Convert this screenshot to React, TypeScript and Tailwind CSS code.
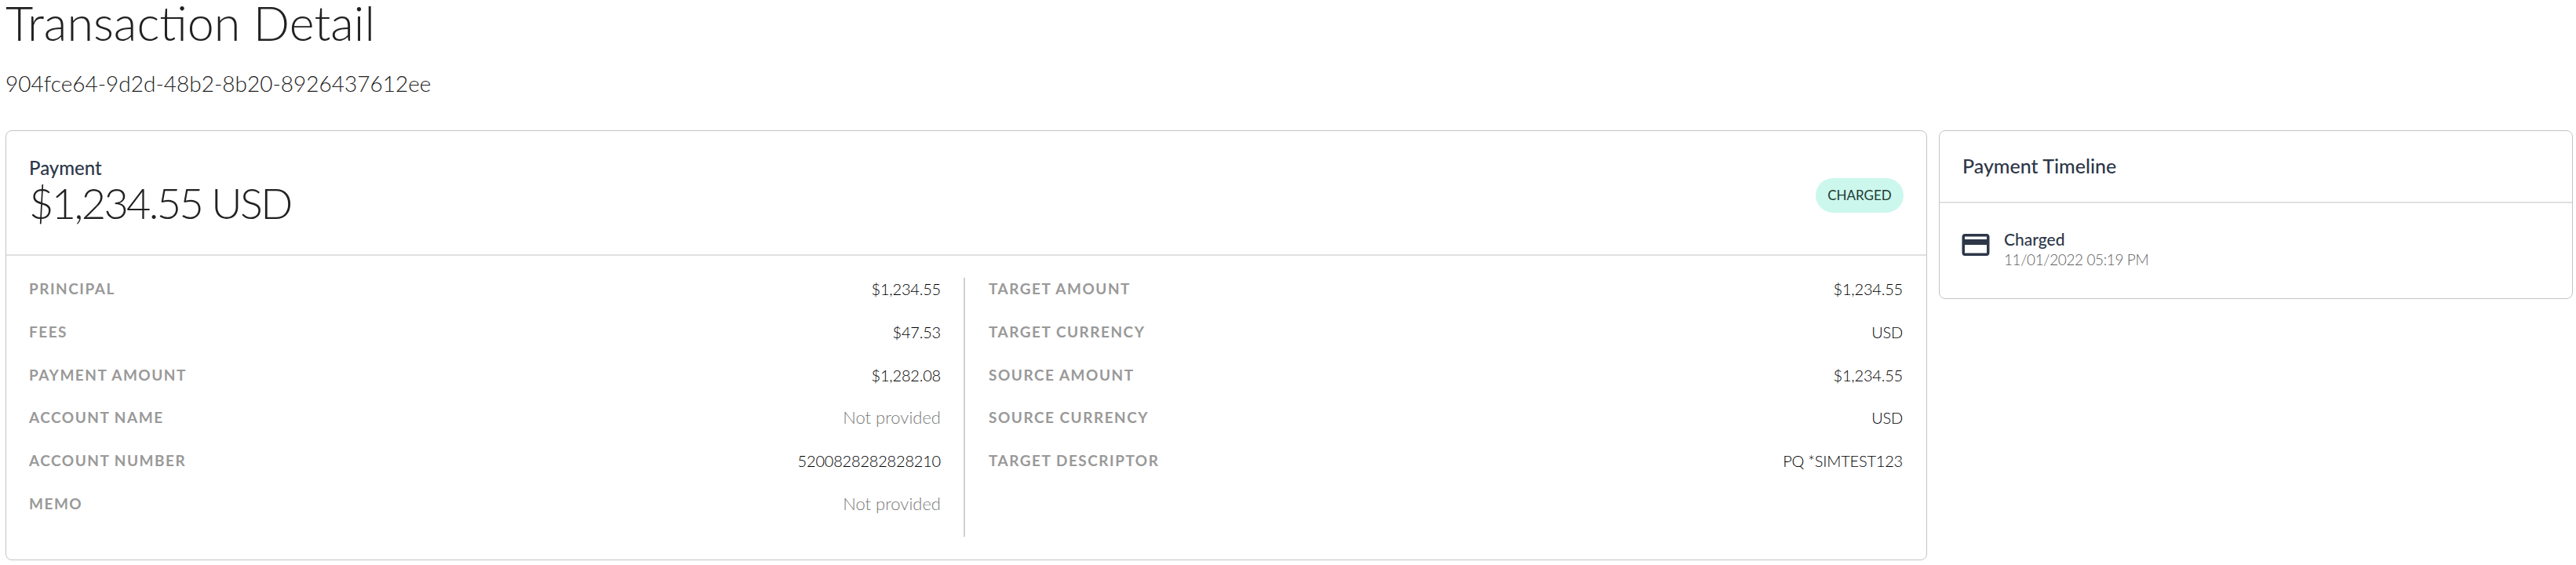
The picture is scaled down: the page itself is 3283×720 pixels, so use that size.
const sans = "font-['Lato','Open_Sans',sans-serif]";

const leftRows = [
  { label: "PRINCIPAL", value: "$1,234.55" },
  { label: "FEES", value: "$47.53" },
  { label: "PAYMENT AMOUNT", value: "$1,282.08" },
  { label: "ACCOUNT NAME", value: "Not provided", muted: true },
  { label: "ACCOUNT NUMBER", value: "5200828282828210" },
  { label: "MEMO", value: "Not provided", muted: true },
];

const rightRows = [
  { label: "TARGET AMOUNT", value: "$1,234.55" },
  { label: "TARGET CURRENCY", value: "USD" },
  { label: "SOURCE AMOUNT", value: "$1,234.55" },
  { label: "SOURCE CURRENCY", value: "USD" },
  { label: "TARGET DESCRIPTOR", value: "PQ *SIMTEST123" },
];

interface Row {
  label: string;
  value: string;
  muted?: boolean;
}

function DetailRow({ label, value, muted }: Row) {
  return (
    <div className="flex h-[54.8px] items-start justify-between leading-[28px]">
      <span className="text-[19px] font-bold tracking-[1.5px] text-[#999999]">{label}</span>
      {muted ? (
        <span className="text-[22px] font-light text-[#7a7a7a]">{value}</span>
      ) : (
        <span className="text-[20px] font-light tracking-[-0.2px] text-black">{value}</span>
      )}
    </div>
  );
}

export default function App() {
  return (
    <div className={`${sans} h-[720px] overflow-hidden bg-white pl-[7px] pr-[4px] text-[#212121]`}>
      <h1 className="h-[58px] text-[61px] font-light leading-[58px]">Transaction Detail</h1>
      <p className="mt-[30px] h-[36px] text-[28px] font-light leading-[36px]">904fce64-9d2d-48b2-8b20-8926437612ee</p>

      <div className="mt-[42px] flex items-start gap-[15px]">
        <div className="h-[548px] w-[2449px] shrink-0 rounded-[8px] border border-[#c4c4c4]">
          <div className="flex h-[159px] items-center justify-between border-b-2 border-[#e0e0e0] px-[29px]">
            <div>
              <div className="-mt-[4px] text-[24px] font-medium leading-[30px] text-[#2d3748]">Payment</div>
              <div className="text-[54px] font-light leading-[60px] tracking-[-2.6px]">$1,234.55 USD</div>
            </div>
            <span className="mt-[6px] flex h-[44px] w-[112px] items-center justify-center rounded-full bg-[#ccf7ec] text-[17px] font-normal text-[#1d3b34]">
              CHARGED
            </span>
          </div>
          <div className="flex pt-[28px]">
            <div className="h-[330px] w-[1222px] shrink-0 border-r-2 border-[#d0d0d0] pl-[29px] pr-[29px]">
              {leftRows.map((row) => (
                <DetailRow key={row.label} {...row} />
              ))}
            </div>
            <div className="grow pl-[30px] pr-[30px]">
              {rightRows.map((row) => (
                <DetailRow key={row.label} {...row} />
              ))}
            </div>
          </div>
        </div>

        <div className="h-[215px] grow rounded-[8px] border border-[#c4c4c4]">
          <div className="flex h-[92px] items-center border-b-2 border-[#e0e0e0] px-[29px] text-[25px] font-medium text-[#2d3748]">
            Payment Timeline
          </div>
          <div className="flex pl-[25px] pt-[33px]">
            <svg viewBox="0 0 24 24" className="-mt-[1px] h-[42px] w-[42px] shrink-0 fill-[#2d3748]">
              <path d="M20 4H4c-1.11 0-1.99.89-1.99 2L2 18c0 1.11.89 2 2 2h16c1.11 0 2-.89 2-2V6c0-1.11-.89-2-2-2zm0 14H4v-6h16v6zm0-10H4V6h16v2z" />
            </svg>
            <div className="ml-[15px]">
              <div className="text-[21px] font-medium leading-[26px] text-[#2d3748]">Charged</div>
              <div className="text-[19px] font-light leading-[26px] tracking-[-0.4px] text-[#5f5f5f]">11/01/2022 05:19 PM</div>
            </div>
          </div>
        </div>
      </div>
    </div>
  );
}
